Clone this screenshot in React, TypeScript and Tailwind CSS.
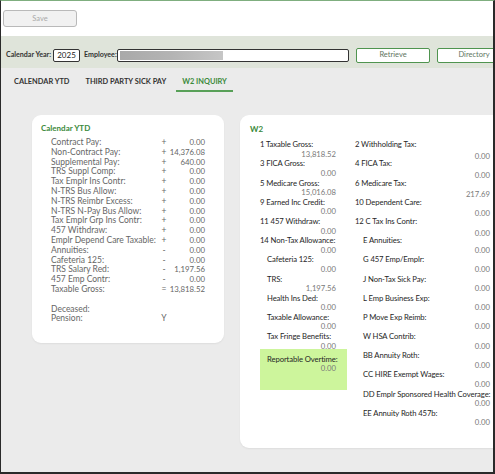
import clsx from "clsx"

type YtdRow = [string, string, string]

const ytdRows: YtdRow[] = [
	["Contract Pay:", "+", "0.00"],
	["Non-Contract Pay:", "+", "14,376.08"],
	["Supplemental Pay:", "+", "640.00"],
	["TRS Suppl Comp:", "+", "0.00"],
	["Tax Emplr Ins Contr:", "+", "0.00"],
	["N-TRS Bus Allow:", "+", "0.00"],
	["N-TRS Reimbr Excess:", "+", "0.00"],
	["N-TRS N-Pay Bus Allow:", "+", "0.00"],
	["Tax Emplr Grp Ins Contr:", "+", "0.00"],
	["457 Withdraw:", "+", "0.00"],
	["Emplr Depend Care Taxable:", "+", "0.00"],
	["Annuities:", "-", "0.00"],
	["Cafeteria 125:", "-", "0.00"],
	["TRS Salary Red:", "-", "1,197.56"],
	["457 Emp Contr:", "-", "0.00"],
	["Taxable Gross:", "=", "13,818.52"],
]

interface W2Item {
	label: string
	value: string
	sub?: boolean
	shift?: boolean
}

const w2Left: W2Item[] = [
	{ label: "1 Taxable Gross:", value: "13,818.52" },
	{ label: "3 FICA Gross:", value: "0.00" },
	{ label: "5 Medicare Gross:", value: "15,016.08" },
	{ label: "9 Earned Inc Credit:", value: "0.00" },
	{ label: "11 457 Withdraw:", value: "0.00" },
	{ label: "14 Non-Tax Allowance:", value: "0.00" },
	{ label: "Cafeteria 125:", value: "0.00", sub: true },
	{ label: "TRS:", value: "1,197.56", sub: true },
	{ label: "Health Ins Ded:", value: "0.00", sub: true },
	{ label: "Taxable Allowance:", value: "0.00", sub: true },
	{ label: "Tax Fringe Benefits:", value: "0.00", sub: true },
]

const w2Right: W2Item[] = [
	{ label: "2 Withholding Tax:", value: "0.00", shift: true },
	{ label: "4 FICA Tax:", value: "0.00", shift: true },
	{ label: "6 Medicare Tax:", value: "217.69", shift: true },
	{ label: "10 Dependent Care:", value: "0.00", shift: true },
	{ label: "12 C Tax Ins Contr:", value: "0.00", shift: true },
	{ label: "E Annuities:", value: "0.00", sub: true },
	{ label: "G 457 Emp/Emplr:", value: "0.00", sub: true },
	{ label: "J Non-Tax Sick Pay:", value: "0.00", sub: true },
	{ label: "L Emp Business Exp:", value: "0.00", sub: true },
	{ label: "P Move Exp Reimb:", value: "0.00", sub: true },
	{ label: "W HSA Contrib:", value: "0.00", sub: true },
	{ label: "BB Annuity Roth:", value: "0.00", sub: true },
	{ label: "CC HIRE Exempt Wages:", value: "0.00", sub: true },
	{ label: "DD Emplr Sponsored Health Coverage:", value: "0.00", sub: true },
	{ label: "EE Annuity Roth 457b:", value: "0.00", sub: true },
]

function W2Pair({ item, indent }: { item: W2Item, indent: string }) {
	return <div className="h-[19.2px] flex flex-col">
		<div className={clsx("leading-[9.6px] h-[9.6px] whitespace-nowrap text-[#262626] tracking-[-0.1px]", { [indent]: item.sub })}>{item.label}</div>
		<div className={clsx("leading-[9.6px] h-[9.6px] flex justify-end text-[#7a7a7a] whitespace-nowrap", { "mt-[2px]": item.shift })}>{item.value}</div>
	</div>
}

function CalendarYtdCard() {
	return <div className="ml-[31px] w-[192px] h-[228px] shrink-0 bg-white rounded-[9px] shadow-[0_1px_2px_rgba(0,0,0,0.06)] pt-[8px]">
		<div className="pl-[9px] h-[10px] leading-[10px] text-[8px] font-bold text-[#3b8a3b]">Calendar YTD</div>
		<div className="mt-[5px] pl-[19px] pr-[19px] text-[8.5px] text-[#666]">
			{ytdRows.map(([label, sign, value]) =>
				<div key={label} className="grid grid-cols-[109px_8px_minmax(0,1fr)] h-[9.8px] leading-[9.8px]">
					<div className="whitespace-nowrap">{label}</div>
					<div className="text-center">{sign}</div>
					<div className="flex justify-end whitespace-nowrap text-[7.8px]">{value}</div>
				</div>
			)}
			<div className="h-[9.8px]"></div>
			<div className="grid grid-cols-[109px_8px_minmax(0,1fr)] h-[9.8px] leading-[9.8px]">
				<div>Deceased:</div>
				<div></div>
				<div></div>
			</div>
			<div className="grid grid-cols-[109px_8px_minmax(0,1fr)] h-[9.8px] leading-[9.8px]">
				<div>Pension:</div>
				<div className="text-center">Y</div>
				<div></div>
			</div>
		</div>
	</div>
}

function W2Card() {
	return <div className="ml-[16px] w-[280px] h-[333px] shrink-0 bg-white rounded-[9px] shadow-[0_1px_2px_rgba(0,0,0,0.06)] pt-[9px] pl-[10px]">
		<div className="h-[10px] leading-[10px] text-[8px] font-bold text-[#3b8a3b]">W2</div>
		<div className="mt-[6.2px] pl-[10px] flex text-[7.7px]">
			<div className="w-[76px] flex flex-col">
				{w2Left.map(item => <W2Pair key={item.label} item={item} indent="pl-[7px]" />)}
				<div className="-mt-[2px] w-[87px] h-[41px] bg-[#cdf59c] pt-[5.4px] pl-[7px] pr-[11px]">
					<div className="leading-[9.6px] whitespace-nowrap text-[#262626] tracking-[-0.1px]">Reportable Overtime:</div>
					<div className="leading-[9.6px] flex justify-end text-[#7a7a7a]">0.00</div>
				</div>
			</div>
			<div className="ml-[19px] w-[135px] flex flex-col">
				{w2Right.map(item => <W2Pair key={item.label} item={item} indent="pl-[8px]" />)}
			</div>
		</div>
	</div>
}

export default function App() {
	return <div className="w-[495px] h-[474px] overflow-hidden bg-[#ebebeb] border-l border-r-2 border-b-2 border-[#2a2a2a] border-t border-t-[#7fae7f] font-['Lato',sans-serif] flex flex-col">
		{/* toolbar */}
		<div className="h-[35px] shrink-0 bg-white flex items-center pl-[2px]">
			<button className="w-[74px] h-[17px] bg-[#f1f1f1] border border-[#b9b9b9] rounded-[3px] text-[7.5px] text-[#aaa]">Save</button>
		</div>

		{/* search band */}
		<div className="h-[32px] shrink-0 bg-[#dfe4da] flex items-center pt-[6px] pl-[5px] text-[7.1px] font-bold text-[#333] whitespace-nowrap">
			<span className="w-[47px] shrink-0">Calendar Year:</span>
			<div className="w-[27px] h-[13px] shrink-0 bg-white border border-[#333] rounded-[2px] flex items-center justify-center font-normal text-[8px] text-[#222]">2025</div>
			<span className="ml-[4px] w-[33px] shrink-0">Employee:</span>
			<div className="w-[232px] h-[13px] shrink-0 bg-white border border-[#333] rounded-[2px] p-[1px] pl-[2px]">
				<div className="w-[103px] h-full bg-linear-to-r from-[#a9a9a9] via-[#b4b4b4] to-[#c6c6c6]"></div>
			</div>
			<button className="ml-[7px] w-[74px] h-[15px] shrink-0 bg-white border border-[#4f944f] rounded-[2px] font-normal text-[7.5px] text-[#5e755e]">Retrieve</button>
			<button className="ml-[7px] w-[74px] h-[15px] shrink-0 bg-white border border-[#4f944f] rounded-[2px] font-normal text-[7.5px] text-[#5e755e]">Directory</button>
		</div>

		{/* tabs */}
		<div className="mt-[6px] ml-[7px] flex gap-[4px] text-[7.4px] font-bold text-[#333] uppercase">
			<div className="h-[18px] px-[6px] flex items-center border-b-2 border-transparent">Calendar YTD</div>
			<div className="h-[18px] px-[6px] flex items-center border-b-2 border-transparent">Third Party Sick Pay</div>
			<div className="h-[18px] px-[6px] flex items-center border-b-2 border-[#58a058] text-[#3b8a3b]">W2 Inquiry</div>
		</div>

		<div className="mt-[23px] flex items-start">
			<CalendarYtdCard />
			<W2Card />
		</div>
	</div>
}
